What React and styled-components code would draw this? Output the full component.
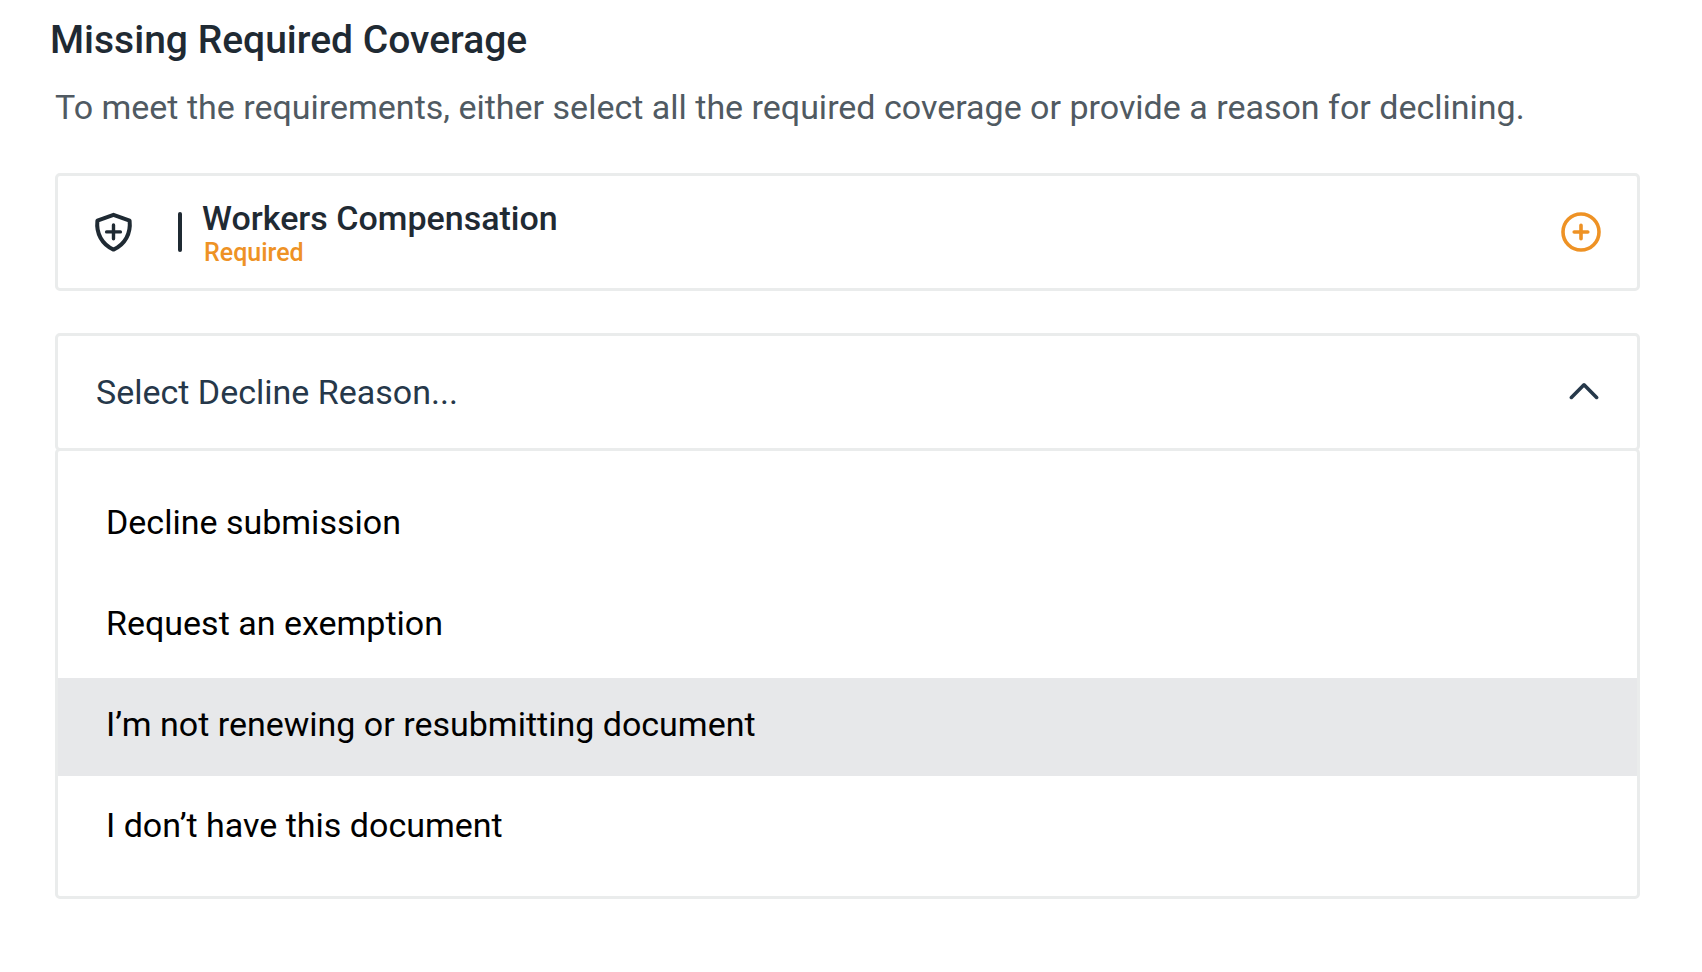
import React, { useState } from 'react'
import styled, { createGlobalStyle } from 'styled-components'

const reasons = [
  'Decline submission',
  'Request an exemption',
  'I’m not renewing or resubmitting document',
  'I don’t have this document',
]

function ShieldIcon() {
  return (
    <svg width="40" height="40" viewBox="0 0 40 40" fill="none" stroke="#1f2a33" strokeWidth="4" strokeLinecap="round" strokeLinejoin="round" aria-hidden="true">
      <path d="M19.5 2.8 L35.6 8.6 C37 21.5 31 32.5 19.5 37.6 C8 32.5 2 21.5 3.4 8.6 Z" />
      <path strokeWidth="3.4" d="M19.5 13 V26.8 M12.6 19.9 H26.4" />
    </svg>
  )
}

function PlusCircleIcon() {
  return (
    <svg width="40" height="40" viewBox="0 0 40 40" fill="none" stroke="#ee9225" strokeWidth="3.6" strokeLinecap="round" aria-hidden="true">
      <circle cx="20" cy="20" r="18" />
      <path d="M20 13.2 V26.8 M13.2 20 H26.8" />
    </svg>
  )
}

function App() {
  const [open, setOpen] = useState(true)
  const [value, setValue] = useState('')
  const [active, setActive] = useState(2)

  const toggle = (e) => {
    e.preventDefault()
    setOpen(!open)
  }

  const pick = (reason) => {
    setValue(reason)
    setOpen(false)
  }

  return (
    <Page>
      <GlobalStyle />
      <Title>Missing Required Coverage</Title>
      <Content>
        <Description>
          To meet the requirements, either select all the required coverage or provide a reason for declining.
        </Description>
        <Coverage>
          <ShieldIcon />
          <Divider />
          <CoverageText>
            <CoverageName>Workers Compensation</CoverageName>
            <CoverageTag>Required</CoverageTag>
          </CoverageText>
          <AddButton type="button" aria-label="Add Workers Compensation">
            <PlusCircleIcon />
          </AddButton>
        </Coverage>
        <SelectBox>
          <Select
            aria-label="Decline reason"
            value={value}
            onMouseDown={toggle}
            onChange={(e) => setValue(e.target.value)}
          >
            <option value="">Select Decline Reason...</option>
            {reasons.map((reason) => (
              <option key={reason} value={reason}>{reason}</option>
            ))}
          </Select>
          <Chevron $open={open} width="30" height="20" viewBox="0 0 30 20" aria-hidden="true">
            <path d="M2.4 15.4 L15 2.8 L27.6 15.4" />
          </Chevron>
        </SelectBox>
        {open && (
          <Menu>
            {reasons.map((reason, i) => (
              <li key={reason}>
                <Option
                  type="button"
                  $active={i === active}
                  onMouseEnter={() => setActive(i)}
                  onClick={() => pick(reason)}
                >
                  {reason}
                </Option>
              </li>
            ))}
          </Menu>
        )}
      </Content>
    </Page>
  )
}

export default App

const GlobalStyle = createGlobalStyle`
*{
  box-sizing:border-box;
}
body{
  margin:0;
  background:#ffffff;
  font-family:Roboto, sans-serif;
}
button, select{
  font-family:inherit;
}
`
const Page = styled.main`
padding:16px 62px 40px 50px;
`
const Title = styled.h1`
margin:0;
font-size:39px;
font-weight:500;
line-height:48px;
color:#1f2a33;
`
const Content = styled.section`
margin-left:5px;
`
const Description = styled.p`
margin:23px 0 46px;
font-size:34px;
line-height:40px;
color:#505a62;
`
const Panel = styled.div`
display:flex;
align-items:center;
height:118px;
border:3px solid #eaecec;
border-radius:5px;
`
const Coverage = styled(Panel)`
padding:0 36px;
margin-bottom:42px;
`
const Divider = styled.span`
width:4px;
height:40px;
margin:0 20px 0 44px;
border-radius:2px;
background:#1f2a33;
`
const CoverageText = styled.div`
flex:1;
display:flex;
flex-direction:column;
padding-top:2px;
`
const CoverageName = styled.span`
font-size:34px;
font-weight:500;
line-height:40px;
color:#1f2a33;
`
const CoverageTag = styled.span`
padding-left:2px;
font-size:25px;
font-weight:500;
line-height:30px;
color:#ee9225;
`
const AddButton = styled.button`
display:flex;
padding:0;
border:0;
background:none;
cursor:pointer;
`
const SelectBox = styled(Panel)`
position:relative;
`
const Select = styled.select`
appearance:none;
flex:1;
height:100%;
padding:0 84px 0 38px;
border:0;
outline:none;
background:none;
font-size:34px;
color:#26384a;
cursor:pointer;
`
const Chevron = styled.svg`
position:absolute;
right:38px;
pointer-events:none;
fill:none;
stroke:#26384a;
stroke-width:3.6;
stroke-linecap:round;
stroke-linejoin:round;
transform:${(p) => (p.$open ? 'none' : 'rotate(180deg)')};
`
const Menu = styled.ul`
display:flex;
flex-direction:column;
gap:3px;
margin:-3px 0 0;
padding:25px 0 19px;
list-style:none;
border:3px solid #eaecec;
border-radius:5px;
`
const Option = styled.button`
display:block;
width:100%;
height:98px;
padding:0 48px 6px;
border:0;
text-align:left;
font-size:34px;
color:#000000;
background:${(p) => (p.$active ? '#e7e8ea' : 'transparent')};
cursor:pointer;
`
